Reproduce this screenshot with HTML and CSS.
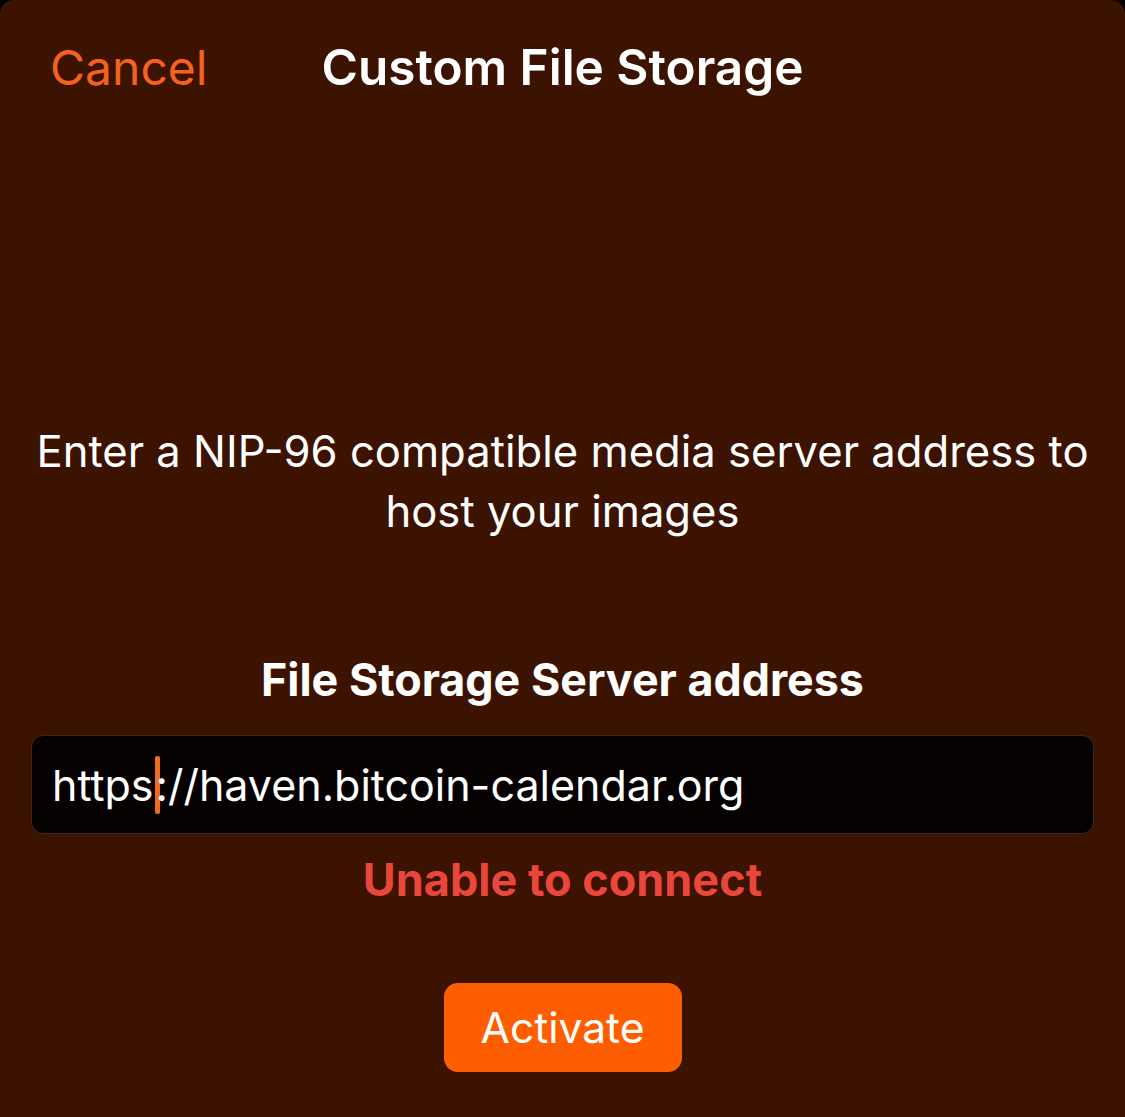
FILE: index.html
```html
<!DOCTYPE html>
<html lang="en">
<head>
<meta charset="utf-8">
<title>Custom File Storage</title>
<link rel="stylesheet" href="styles.css">
</head>
<body>
<div class="sheet">
  <header class="nav">
    <span class="cancel">Cancel</span>
    <h1 class="title">Custom File Storage</h1>
    <span class="spacer"></span>
  </header>
  <p class="desc">Enter a NIP-96 compatible media server address to host your images</p>
  <h2 class="label">File Storage Server address</h2>
  <div class="field"><span class="value">https<span class="caret"></span>://haven.bitcoin-calendar.org</span></div>
  <p class="error">Unable to connect</p>
  <div class="actions"><button class="activate">Activate</button></div>
</div>
</body>
</html>
```

FILE: styles.css
```css
html, body {
  margin: 0;
  padding: 0;
  background: #000;
}
.sheet {
  width: 1125px;
  height: 1117px;
  background: #3c1300;
  border-radius: 14px 14px 0 0;
  font-family: Inter, "Noto Sans", sans-serif;
  color: #fff;
  display: flex;
  flex-direction: column;
  overflow: hidden;
}
.nav {
  height: 134px;
  display: grid;
  grid-template-columns: 1fr auto 1fr;
  align-items: center;
  padding: 0 50px;
}
.cancel {
  font-size: 48px;
  color: #f5621e;
  justify-self: start;
}
.title {
  margin: 0;
  font-size: 49.5px;
  font-weight: 600;
}
.desc {
  margin: 288px 20px 0;
  font-size: 43.6px;
  line-height: 60px;
  text-align: center;
}
.label {
  margin: 108px 0 0;
  font-size: 44.8px;
  line-height: 60px;
  font-weight: 700;
  text-align: center;
}
.field {
  margin: 25px 31px 0;
  height: 99px;
  box-sizing: border-box;
  background: #040100;
  border: 1px solid #3a2a22;
  border-radius: 12px;
  display: flex;
  align-items: center;
  padding: 0 20px;
}
.value {
  font-size: 43px;
  display: flex;
  align-items: center;
}
.caret {
  display: inline-block;
  width: 5px;
  height: 58px;
  margin: 0 -4px 0 1px;
  background: #f26a1b;
  border-radius: 2px;
}
.error {
  margin: 16px 0 0;
  font-size: 45px;
  line-height: 60px;
  font-weight: 700;
  color: #e9463c;
  text-align: center;
}
.actions {
  display: flex;
  justify-content: center;
  margin-top: 73px;
}
.activate {
  width: 238px;
  height: 89px;
  border: none;
  border-radius: 14px;
  background: #ff5e00;
  color: #fff;
  font-family: Inter, "Noto Sans", sans-serif;
  font-size: 42.6px;
  padding: 0;
}
```
